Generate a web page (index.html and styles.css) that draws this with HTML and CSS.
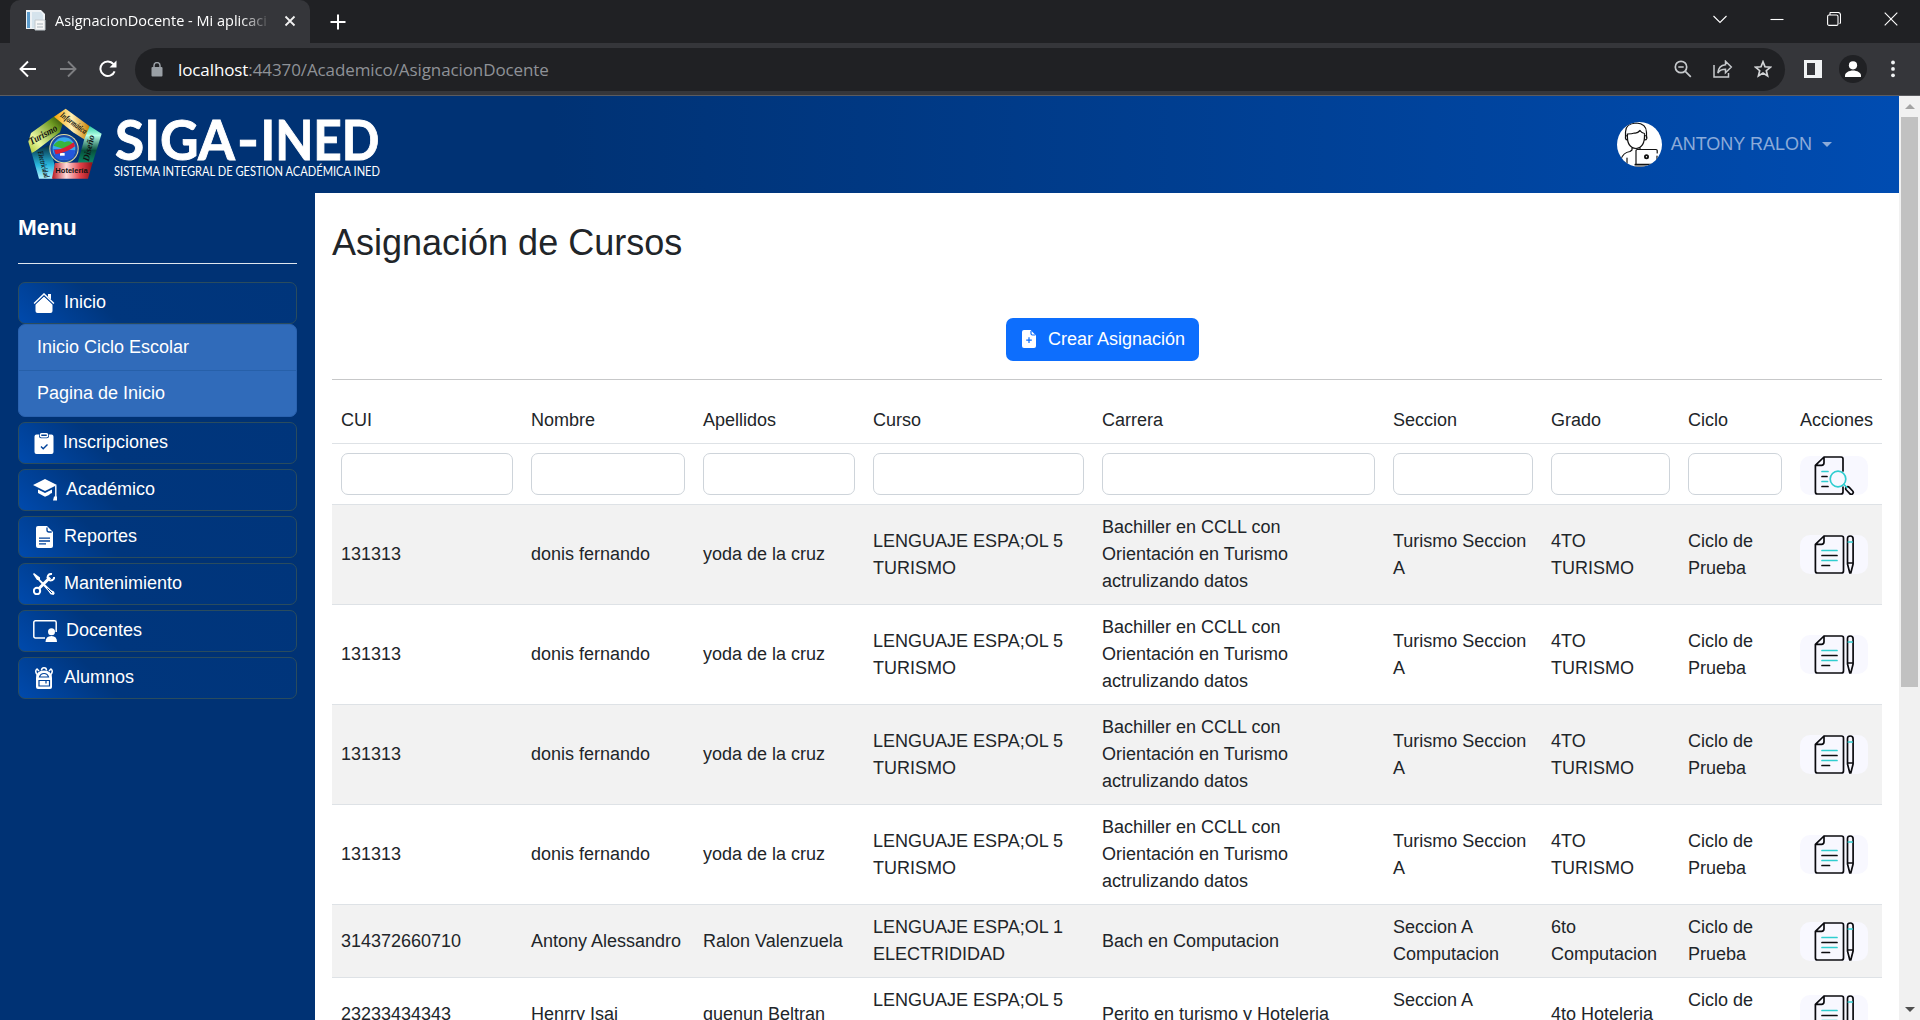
FILE: index.html
```html
<!DOCTYPE html>
<html lang="es">
<head>
<meta charset="utf-8">
<title>AsignacionDocente - Mi aplicación</title>
<link rel="stylesheet" href="styles.css">
</head>
<body>
<svg class="defs" width="0" height="0">
  <defs>
    <symbol id="i-edit" viewBox="0 0 68 39">
      <g fill="none" stroke="#0b0b0f" stroke-width="1.7" stroke-linejoin="round" stroke-linecap="round">
        <path d="M24 1h17.500q2 0 2 2v33q0 2-2 2H17.400q-2 0-2-2V9.300L24 1v5.800q0 2.500-2.500 2.500H16"/>
        <path d="M47.500 3.800q0-2.800 2.800-2.800t2.800 2.800V29l-2.300 9h-1L47.500 29zM47.500 28h5.600"/>
        <path d="M22 20.500h15M22 30.500h7.500"/>
      </g>
      <path d="M22 15.500h15M22 25.500h15M48.300 7h4" fill="none" stroke="#30cdd0" stroke-width="1.700" stroke-linecap="round"/>
    </symbol>
    <symbol id="i-find" viewBox="0 0 68 39">
      <g fill="none" stroke="#0b0b0f" stroke-width="1.700" stroke-linejoin="round" stroke-linecap="round">
        <path d="M43 15V3q0-2-2-2H24l-8.600 8.300V36q0 2 2 2H41q2 0 2-2v-5M24 1v5.800q0 2.500-2.500 2.500H16"/>
        <path d="M22 20.500h5M22 30.500h6"/>
        <rect x="45" y="32.500" width="9" height="4" rx="2" transform="rotate(47 49.500 34.500)"/>
      </g>
      <g fill="none" stroke="#30cdd0" stroke-width="1.700" stroke-linecap="round"><path d="M22 15.500h6M22 25.500h5.500M44 28.500l3 3"/><circle cx="38" cy="23" r="7.800"/></g>
    </symbol>
  </defs>
</svg>

<div class="browser">
  <div class="tabstrip">
    <div class="tab">
      <svg class="favicon" width="21" height="21" viewBox="0 0 21 21"><path d="M1 0h15l4 4v15H1z" fill="#eef2f5"/><path d="M2 2h3v16H2z" fill="#5c9ccc"/><path d="M7 2h9l2 3v13H7z" fill="#d5e3ec"/><path d="M10 10h10v10H10z" fill="#f7f7f7" stroke="#c2c9ce"/><path d="M12 14h6M12 17h6" stroke="#aab4bb"/></svg>
      <span class="tab-title">AsignacionDocente - Mi aplicaci</span>
      <svg class="tab-close" width="12" height="12" viewBox="0 0 12 12"><path d="M1.500 1.500l9 9M10.500 1.500l-9 9" stroke="#f1f1f1" stroke-width="1.800"/></svg>
    </div>
    <svg class="new-tab" width="16" height="16" viewBox="0 0 16 16"><path d="M8 .5v15M.5 8h15" stroke="#fff" stroke-width="2"/></svg>
    <div class="window-buttons">
      <span><svg width="14" height="14" viewBox="0 0 14 14"><path d="M.5 4l6.500 6.500L13.500 4" class="wline"/></svg></span>
      <span><svg width="14" height="14" viewBox="0 0 14 14"><path d="M.5 7.500h13" class="wline"/></svg></span>
      <span><svg width="14" height="14" viewBox="0 0 14 14"><rect x=".6" y="3" width="10.400" height="10.400" rx="1.500" class="wline"/><path d="M3 3V1q0-.5.800-.5h7.200q2.500 0 2.500 2.500v7.500q0 .8-1 1" class="wline"/></svg></span>
      <span><svg width="14" height="14" viewBox="0 0 14 14"><path d="M.7.7l12.600 12.600M13.300.7L.7 13.300" class="wline"/></svg></span>
    </div>
  </div>
  <div class="toolbar">
    <div class="nav">
      <svg width="18" height="18" viewBox="0 0 18 18"><path d="M17 9H2M9 1.500L1.500 9 9 16.500" fill="none" stroke="#fff" stroke-width="1.900"/></svg>
      <svg width="18" height="18" viewBox="0 0 18 18"><path d="M1 9h15M9 1.500L16.500 9 9 16.500" fill="none" stroke="#7d7e81" stroke-width="1.900"/></svg>
      <svg width="18" height="18" viewBox="0 0 18 18"><path d="M15.600 11.300A7.300 7.300 0 1 1 14.500 4.200" fill="none" stroke="#fff" stroke-width="2"/><path d="M17.500.5v7h-7z" fill="#fff"/></svg>
    </div>
    <div class="omnibox">
      <svg width="12" height="15" viewBox="0 0 12 15"><rect x=".5" y="5" width="11" height="9.500" rx="1" fill="#9aa0a6"/><path d="M3 6V3.600a3 3 0 0 1 6 0V6" fill="none" stroke="#9aa0a6" stroke-width="1.500"/></svg>
      <div class="url"><span>localhost</span>:44370/Academico/AsignacionDocente</div>
      <div class="omni-icons">
        <span><svg width="18" height="18" viewBox="0 0 18 18" fill="none" stroke="#c7cacd" stroke-width="1.700"><circle cx="7" cy="7" r="5.700"/><path d="M11.300 11.300l5.500 5.500M4.300 7h5.400"/></svg></span>
        <span><svg width="20" height="18" viewBox="0 0 20 18" fill="none" stroke="#c7cacd" stroke-width="1.500"><path d="M1 5v12h14.500v-4"/><path d="M12.500 1.200L18.300 7l-5.800 5.700V9.300Q7 9.300 4.800 13 5.500 5.500 12.500 4.800z"/></svg></span>
        <span><svg width="18" height="18" viewBox="0 0 18 18" fill="none" stroke="#d3d5d7" stroke-width="1.700"><path d="M9 1.800l2 5 5.400.4-4.100 3.500 1.300 5.300L9 13.100 4.400 16l1.300-5.300L1.600 7.200 7 6.800z"/></svg></span>
      </div>
    </div>
    <div class="tool-icons">
      <span><svg width="18" height="18" viewBox="0 0 18 18"><path d="M0 0h18v18H0zM3 3v12h8V3z" fill="#f1f3f4" fill-rule="evenodd"/></svg></span>
      <span><svg width="28" height="28" viewBox="0 0 28 28"><circle cx="14" cy="14" r="14" fill="#202124"/><circle cx="14" cy="10.300" r="4.100" fill="#fff"/><path d="M6 22v-1.500c0-3 4-5.100 8-5.100s8 2.100 8 5.100V22z" fill="#fff"/></svg></span>
      <span><svg width="6" height="18" viewBox="0 0 6 18" fill="#f1f3f4"><circle cx="3" cy="2.500" r="1.900"/><circle cx="3" cy="8.900" r="1.900"/><circle cx="3" cy="15.300" r="1.900"/></svg></span>
    </div>
  </div>
</div>

<div class="viewport">
  <div class="page">
    <header class="site-header">
      <svg class="logo" width="360" height="84" viewBox="0 -4 360 84">
        <defs>
          <linearGradient id="gy"><stop offset="0" stop-color="#f5a400"/><stop offset=".5" stop-color="#fff0b5"/><stop offset="1" stop-color="#c87f00"/></linearGradient>
          <linearGradient id="gg" x1="0" y1="1" x2="1" y2="0"><stop offset="0" stop-color="#a9c52a"/><stop offset=".3" stop-color="#e9f7a0"/><stop offset=".75" stop-color="#6c9820"/><stop offset="1" stop-color="#263d05"/></linearGradient>
          <linearGradient id="gt" x1="0" y1="0" x2="0" y2="1"><stop offset="0" stop-color="#2cc9a0"/><stop offset=".25" stop-color="#b6ffe8"/><stop offset=".65" stop-color="#07503b"/><stop offset="1" stop-color="#0c8b69"/></linearGradient>
          <linearGradient id="gc" x1="0" y1="0" x2="0" y2="1"><stop offset="0" stop-color="#042c3d"/><stop offset=".6" stop-color="#28b8df"/><stop offset="1" stop-color="#b4f3ff"/></linearGradient>
          <linearGradient id="gr"><stop offset="0" stop-color="#b8151d"/><stop offset=".35" stop-color="#ffdada"/><stop offset=".7" stop-color="#e24047"/><stop offset="1" stop-color="#8d1119"/></linearGradient>
        </defs>
        <g transform="translate(-7 -7.300) scale(.33333)">
          <path d="M25 126l8-26 70-50 26 20-9 28-84 64z" fill="url(#gg)"/>
          <path d="M102 51l35-24 72 53-12 42-38-24z" fill="url(#gy)"/>
          <path d="M209 79l36 23-28 90-44-2 20-72z" fill="url(#gt)"/>
          <path d="M35 160l52-24 17 60-5 41H57z" fill="url(#gc)"/>
          <path d="M105 190l113-2-14 49H96z" fill="url(#gr)"/>
          <circle cx="132" cy="147" r="44" fill="#e5dca0"/><circle cx="132" cy="147" r="41" fill="#1c4ea8"/><circle cx="132" cy="147" r="34" fill="#39a9ee"/>
          <path d="M100 138q16-24 34-10 18-10 28 10l-30 10z" fill="#37b53d"/>
          <path d="M100 148l66 4-6 22q-28 14-54 0z" fill="#2457dc"/><path d="M120 160h14v8h-14z" fill="#fff"/><path d="M103 151q30-2 58-23l4 12q-22 18-58 24z" fill="#d91f35"/>
          <g font-family="Liberation Sans" fill="#111">
            <text class="cursive" x="34" y="136" font-size="31" textLength="92" lengthAdjust="spacingAndGlyphs" transform="rotate(-29 34 136)">Turismo</text>
            <text class="cursive" x="119" y="50" font-size="26" textLength="92" lengthAdjust="spacingAndGlyphs" transform="rotate(36 119 50)">Informática</text>
            <text class="cursive" x="206" y="186" font-size="28" textLength="80" lengthAdjust="spacingAndGlyphs" transform="rotate(-77 206 186)">Diseño</text>
            <text class="cursive" x="53" y="156" font-size="24" textLength="82" lengthAdjust="spacingAndGlyphs" transform="rotate(76 53 156)">Electricidad</text>
            <text x="106" y="219" font-size="20" font-weight="bold" textLength="97" lengthAdjust="spacingAndGlyphs">Hotelería</text>
          </g>
        </g>
        <g class="logo-name">
          <text x="88" y="52.500" textLength="120" lengthAdjust="spacingAndGlyphs">SIGA</text>
          <text x="210" y="52.500" textLength="22" lengthAdjust="spacingAndGlyphs">-</text>
          <text x="233.500" y="52.500" textLength="119" lengthAdjust="spacingAndGlyphs">INED</text>
        </g>
        <text class="logo-sub" x="87" y="69.200" textLength="266" lengthAdjust="spacingAndGlyphs">SISTEMA INTEGRAL DE GESTION ACADÉMICA INED</text>
      </svg>
      <div class="user">
        <svg width="45" height="45" viewBox="0 0 45 45">
          <clipPath id="av"><circle cx="22.500" cy="22.500" r="22.500"/></clipPath>
          <circle cx="22.500" cy="22.500" r="22.500" fill="#fff"/>
          <g clip-path="url(#av)" fill="none" stroke="#111" stroke-width="1.200" stroke-linecap="round" stroke-linejoin="round">
            <path d="M8.500 15.500V10q0-8.500 10.500-9 10.500.5 10.500 9.500v5M10.200 12Q15 12 17.500 11q3 .5 5.500-2.500 2 3 4.500 3M10.500 12.500q-1 13 8.500 14 9-1 8.500-14M10.300 13.500Q8 13.500 8.500 16.500q.5 1.500 2 1.500M28 13.500q2.300 0 1.800 3-.5 1.500-2 1.500M15 25.500v2.500l-2 1.500q-7 1-9 8v5M23 25v2M10 36v8M19 42V28.500q0-1 1.200-1H39q1.200 0 1.200 1V31M40 34v8.500M18 42.300h24M18 44h12"/>
            <circle cx="29.500" cy="34.700" r="1.600" stroke-width="1.800"/>
          </g>
        </svg>
        <span>ANTONY RALON</span>
        <i class="caret"></i>
      </div>
    </header>
    <div class="columns">
      <aside class="sidebar">
        <h5>Menu</h5>
        <nav>
          <div>
            <a class="item"><svg width="21" height="20" viewBox="0 0 21 20"><path d="M10.500 3.500L19 11v7q0 2-2 2H4q-2 0-2-2v-7z"/><path d="M.6 10.500l9.900-9.500 9.900 9.500" class="gap"/><path d="M.6 10.500l9.900-9.500 9.900 9.500" class="st"/><path d="M14.500 1h3v5.500l-3-2.800z"/></svg><span>Inicio</span></a>
            <div class="submenu"><a>Inicio Ciclo Escolar</a><a>Pagina de Inicio</a></div>
          </div>
          <a class="item tight"><svg width="20" height="21" viewBox="0 0 20 21"><path d="M2.500 1.500H5v1.700q0 2 2 2h6q2 0 2-2V1.500h2.500q2 0 2 2V19q0 2-2 2h-15q-2 0-2-2V3.500q0-2 2-2z"/><rect x="6.500" y=".8" width="7" height="3" rx="1" class="st"/><path d="M7 13.500l2.200 2.200 4.300-4.300" fill="none" stroke="#00429a" stroke-width="1.400"/></svg><span>Inscripciones</span></a>
          <a class="item wide"><svg width="24" height="22" viewBox="0 0 24 22"><path d="M12 0l12 6-12 6L0 6zM5 10.500l7 3.500 7-3.500V14q-2 .5-3 2l-4 1.800-7-3.800z"/><path d="M22.800 6.500v12" stroke="#fff" stroke-width="1.400"/><path d="M21 17.500h3v4h-4z"/></svg><span>Académico</span></a>
          <a class="item"><svg width="20" height="22" viewBox="0 0 20 22"><path d="M4 0h9l6 6v14q0 2-2 2H4q-2 0-2-2V2q0-2 2-2z"/><path d="M13 1.500V4q0 2 2 2h2.700M5 12.200h11M5 15h11M5 17.800h7" fill="none" stroke="#00429a" stroke-width="1.300"/></svg><span>Reportes</span></a>
          <a class="item"><svg width="22" height="22" viewBox="0 0 22 22"><path d="M1 0l6 4.500v2L18 17l3 1.500.7 2-1.200 1.500-3-.8-2.500-3.500L5 7H4L0 1z"/><path d="M6 15.500L17 4.500" stroke="#fff" stroke-width="3"/><circle cx="4" cy="18" r="3.200" class="st2"/><path d="M19 1q-4-.5-4.500 3.500 1 4 5 2.500 1.700-1 1.700-3" class="st2"/><path d="M14.500 15.500l4.500 4.500" stroke="#00429a" stroke-width="1"/></svg><span>Mantenimiento</span></a>
          <a class="item wide"><svg width="24" height="22" viewBox="0 0 24 22"><path d="M12 18H2.500q-1.700 0-1.700-1.700V2.500Q.8.800 2.500.8h19q1.700 0 1.700 1.700V12" class="st"/><circle cx="18.500" cy="11.800" r="3.500"/><path d="M12.500 22q0-6 6-6 5.500 0 5.500 6z"/></svg><span>Docentes</span></a>
          <a class="item"><svg width="20" height="22" viewBox="0 0 20 22"><path d="M2 11q0-7.500 8-7.500t8 7.500v9q0 2-2 2H4q-2 0-2-2z"/><path d="M7.500 3.500Q7.500.8 10 .8t2.500 2.700" class="st"/><path d="M3 7.500Q.5 4 3 2l2 2M17 7.500Q19.500 4 17 2l-2 2" class="st"/><path d="M5.500 10q1-3.500 4.500-3.500t4.500 3.500zM5 13.500h10.500V19H5zM12 14v2.500" fill="none" stroke="#00429a" stroke-width="1.200"/></svg><span>Alumnos</span></a>
        </nav>
      </aside>
      <main class="content">
        <h2>Asignación de Cursos</h2>
        <div class="actions"><a class="btn"><svg width="14" height="18" viewBox="0 0 14 18"><path d="M2 0h6.500L14 5.500V16q0 2-2 2H2q-2 0-2-2V2q0-2 2-2z" fill="#fff"/><path d="M9 1v2.500Q9 5 10.500 5H13M7 7.300v5.600M4.200 10.100h5.600" fill="none" stroke="#0d6efd" stroke-width="1.200"/></svg><span>Crear Asignación</span></a></div>
        <hr>
        <table>
          <colgroup><col class="c1"><col class="c2"><col class="c3"><col class="c4"><col class="c5"><col class="c6"><col class="c7"><col class="c8"><col class="c9"></colgroup>
          <thead>
            <tr><th>CUI</th><th>Nombre</th><th>Apellidos</th><th>Curso</th><th>Carrera</th><th>Seccion</th><th>Grado</th><th>Ciclo</th><th>Acciones</th></tr>
          </thead>
          <tbody>
            <tr class="filters"><td><input></td><td><input></td><td><input></td><td><input></td><td><input></td><td><input></td><td><input></td><td><input></td><td class="act"><svg class="icon-btn"><use href="#i-find"/></svg></td></tr>
            <tr class="odd"><td>131313</td><td>donis fernando</td><td>yoda de la cruz</td><td>LENGUAJE ESPA;OL 5<br>TURISMO</td><td>Bachiller en CCLL con<br>Orientación en Turismo<br>actrulizando datos</td><td>Turismo Seccion<br>A</td><td>4TO<br>TURISMO</td><td>Ciclo de<br>Prueba</td><td class="act"><svg class="icon-btn"><use href="#i-edit"/></svg></td></tr>
            <tr><td>131313</td><td>donis fernando</td><td>yoda de la cruz</td><td>LENGUAJE ESPA;OL 5<br>TURISMO</td><td>Bachiller en CCLL con<br>Orientación en Turismo<br>actrulizando datos</td><td>Turismo Seccion<br>A</td><td>4TO<br>TURISMO</td><td>Ciclo de<br>Prueba</td><td class="act"><svg class="icon-btn"><use href="#i-edit"/></svg></td></tr>
            <tr class="odd"><td>131313</td><td>donis fernando</td><td>yoda de la cruz</td><td>LENGUAJE ESPA;OL 5<br>TURISMO</td><td>Bachiller en CCLL con<br>Orientación en Turismo<br>actrulizando datos</td><td>Turismo Seccion<br>A</td><td>4TO<br>TURISMO</td><td>Ciclo de<br>Prueba</td><td class="act"><svg class="icon-btn"><use href="#i-edit"/></svg></td></tr>
            <tr><td>131313</td><td>donis fernando</td><td>yoda de la cruz</td><td>LENGUAJE ESPA;OL 5<br>TURISMO</td><td>Bachiller en CCLL con<br>Orientación en Turismo<br>actrulizando datos</td><td>Turismo Seccion<br>A</td><td>4TO<br>TURISMO</td><td>Ciclo de<br>Prueba</td><td class="act"><svg class="icon-btn"><use href="#i-edit"/></svg></td></tr>
            <tr class="odd"><td>314372660710</td><td>Antony Alessandro</td><td>Ralon Valenzuela</td><td>LENGUAJE ESPA;OL 1<br>ELECTRIDIDAD</td><td>Bach en Computacion</td><td>Seccion A<br>Computacion</td><td>6to<br>Computacion</td><td>Ciclo de<br>Prueba</td><td class="act"><svg class="icon-btn"><use href="#i-edit"/></svg></td></tr>
            <tr><td>23233434343</td><td>Henrry Isai</td><td>quenun Beltran</td><td>LENGUAJE ESPA;OL 5<br>&nbsp;</td><td>Perito en turismo y Hoteleria</td><td>Seccion A<br>&nbsp;</td><td>4to Hoteleria</td><td>Ciclo de<br>&nbsp;</td><td class="act"><svg class="icon-btn"><use href="#i-edit"/></svg></td></tr>
          </tbody>
        </table>
      </main>
    </div>
  </div>
  <div class="scrollbar"><i class="up"></i><div class="thumb"></div><i class="down"></i></div>
</div>
</body>
</html>
```
FILE: styles.css
```css
* { box-sizing: border-box; }
html, body { height: 100%; }
body {
  margin: 0;
  height: 1020px;
  overflow: hidden;
  display: flex;
  flex-direction: column;
  font: 18px/27px "Liberation Sans", Arial, sans-serif;
  color: #212529;
}
svg { display: block; flex: none; }
.defs { position: absolute; }

/* browser frame */
.browser { flex: none; height: 96px; background: #35363a; border-bottom: 1px solid #5b5c60; font-family: "Open Sans", "Noto Sans", sans-serif; }
.tabstrip { height: 43px; background: #202124; display: flex; align-items: center; }
.tab {
  width: 300px; height: 43px; margin-left: 10px; padding: 0 14px 2px 15px;
  background: #35363a; border-radius: 10px 10px 0 0;
  display: flex; align-items: center;
}
.tab-title {
  width: 216px; margin-left: 9px; white-space: nowrap;
  font-size: 14.5px; letter-spacing: 0; color: #fff;
  -webkit-mask-image: linear-gradient(90deg, #000 86%, transparent);
  mask-image: linear-gradient(90deg, #000 86%, transparent);
}
.tab-close { margin-left: 13px; }
.new-tab { margin-left: 20px; }
.window-buttons { margin-left: auto; display: flex; padding: 0 1px 6px 0; }
.window-buttons span { width: 57px; display: flex; justify-content: center; }
.wline { fill: none; stroke: #fff; stroke-width: 1.1; }
.toolbar { height: 52px; display: flex; align-items: center; }
.nav { width: 135px; padding-left: 19px; display: flex; gap: 22px; }
.omnibox {
  width: 1650px; height: 43px; border-radius: 22px; background: #202124;
  display: flex; align-items: center; padding-left: 16px;
}
.url { margin-left: 15px; font-size: 17px; letter-spacing: -0.1px; color: #8f9297; white-space: nowrap; }
.url span { color: #fff; }
.omni-icons { margin-left: auto; padding-right: 2px; display: flex; }
.omni-icons span, .tool-icons span { width: 40px; display: flex; justify-content: center; }
.tool-icons { margin-left: 8px; display: flex; align-items: center; }

/* page */
.viewport { flex: 1; min-height: 0; display: flex; }
.page { width: 1899px; display: flex; flex-direction: column; overflow: hidden; }
.site-header {
  flex: none; height: 97px; padding: 0 67px 0 27px;
  display: flex; align-items: center; justify-content: space-between;
  background: linear-gradient(90deg, #003274 0%, #003274 29%, #004cb1 100%);
}
.logo { overflow: visible; }
.logo-name { font: 700 55px Lato, sans-serif; fill: #fff; stroke: #fff; stroke-width: 0.9; }
.logo-sub { font: 400 13px Lato, sans-serif; fill: #fff; }
.cursive { font-family: "Liberation Serif", serif; font-style: italic; font-weight: bold; }
.user { display: flex; align-items: center; color: #8cabd9; }
.user span { margin-left: 9px; }
.caret { margin-left: 10px; border: 5px solid transparent; border-top-color: #8cabd9; border-bottom: 0; }
.columns { flex: 1; min-height: 0; display: flex; }
.sidebar { flex: none; width: 315px; padding: 21px 18px; background: #003274; color: #fff; }
.sidebar h5 { margin: 0 0 18px; padding-bottom: 22px; border-bottom: 1px solid #dfe6ee; font-size: 22.5px; line-height: 27px; }
.sidebar nav { display: flex; flex-direction: column; gap: 5px; }
.item {
  height: 42px; padding-left: 14px; display: flex; align-items: center; gap: 9px;
  border: 1px solid #2a4c5e; border-radius: 7px;
  background: linear-gradient(45deg, #004aad 0%, #00367d 32%, #00357b 100%);
}
.item svg { fill: #fff; width: 22px; }
.item.wide svg { width: 24px; }
.item.tight { gap: 8px; }
.item span { padding-bottom: 1px; }
.st, .st2 { fill: none; stroke: #fff; stroke-width: 1.5; }
.st2 { stroke-width: 2; }
.gap { fill: none; stroke: #00429a; stroke-width: 3.4; }
.submenu { height: 93px; border: 1px solid #2a62af; border-radius: 7px; background: #306bba; display: flex; flex-direction: column; }
.submenu a { flex: 1; padding: 9px 18px 8px; }
.submenu a + a { border-top: 1px solid #2760a9; }

.content { flex: 1; padding: 0 17px; background: #fff; }
.content h2 { margin: 0; padding-top: 28px; font-size: 36px; font-weight: 400; line-height: 43px; }
.actions { margin-top: 54px; padding-right: 9px; display: flex; justify-content: center; }
.btn { width: 193px; height: 43px; padding: 0 0 1px 16px; display: flex; align-items: center; gap: 12px; background: #0d6efd; color: #fff; border-radius: 7px; white-space: nowrap; }
hr { margin: 18px 0; border: 0; border-top: 1px solid #c7c8c9; }
table { width: 1550px; table-layout: fixed; border-collapse: separate; border-spacing: 0; }
th, td { padding: 9px; text-align: left; vertical-align: middle; font-weight: 400; border-bottom: 1px solid #dee2e6; white-space: nowrap; }
.odd td { background: #f2f2f2; }
input { display: block; width: 100%; height: 42px; border: 1px solid #ced4da; border-radius: 7px; background: #fff; }
.icon-btn { width: 68px; height: 39px; border-radius: 10px; background: #f8f8ff; }
.act { padding-top: 0; padding-bottom: 0; }
.filters .act { padding: 3px 9px 0; }
.c1 { width: 190px; } .c2 { width: 172px; } .c3 { width: 170px; }
.c4 { width: 229px; } .c5 { width: 291px; } .c6 { width: 158px; }
.c7 { width: 137px; } .c8 { width: 112px; } .c9 { width: 91px; }

.scrollbar { width: 21px; padding: 8px 0; background: #f1f1f1; display: flex; flex-direction: column; align-items: center; }
.scrollbar i { border: 5px solid transparent; }
.scrollbar .up { border-bottom-color: #a3a3a3; border-top: 0; }
.scrollbar .down { margin-top: auto; border-top-color: #505050; border-bottom: 0; }
.thumb { width: 17px; height: 570px; margin-top: 8px; background: #c1c1c1; }
```
